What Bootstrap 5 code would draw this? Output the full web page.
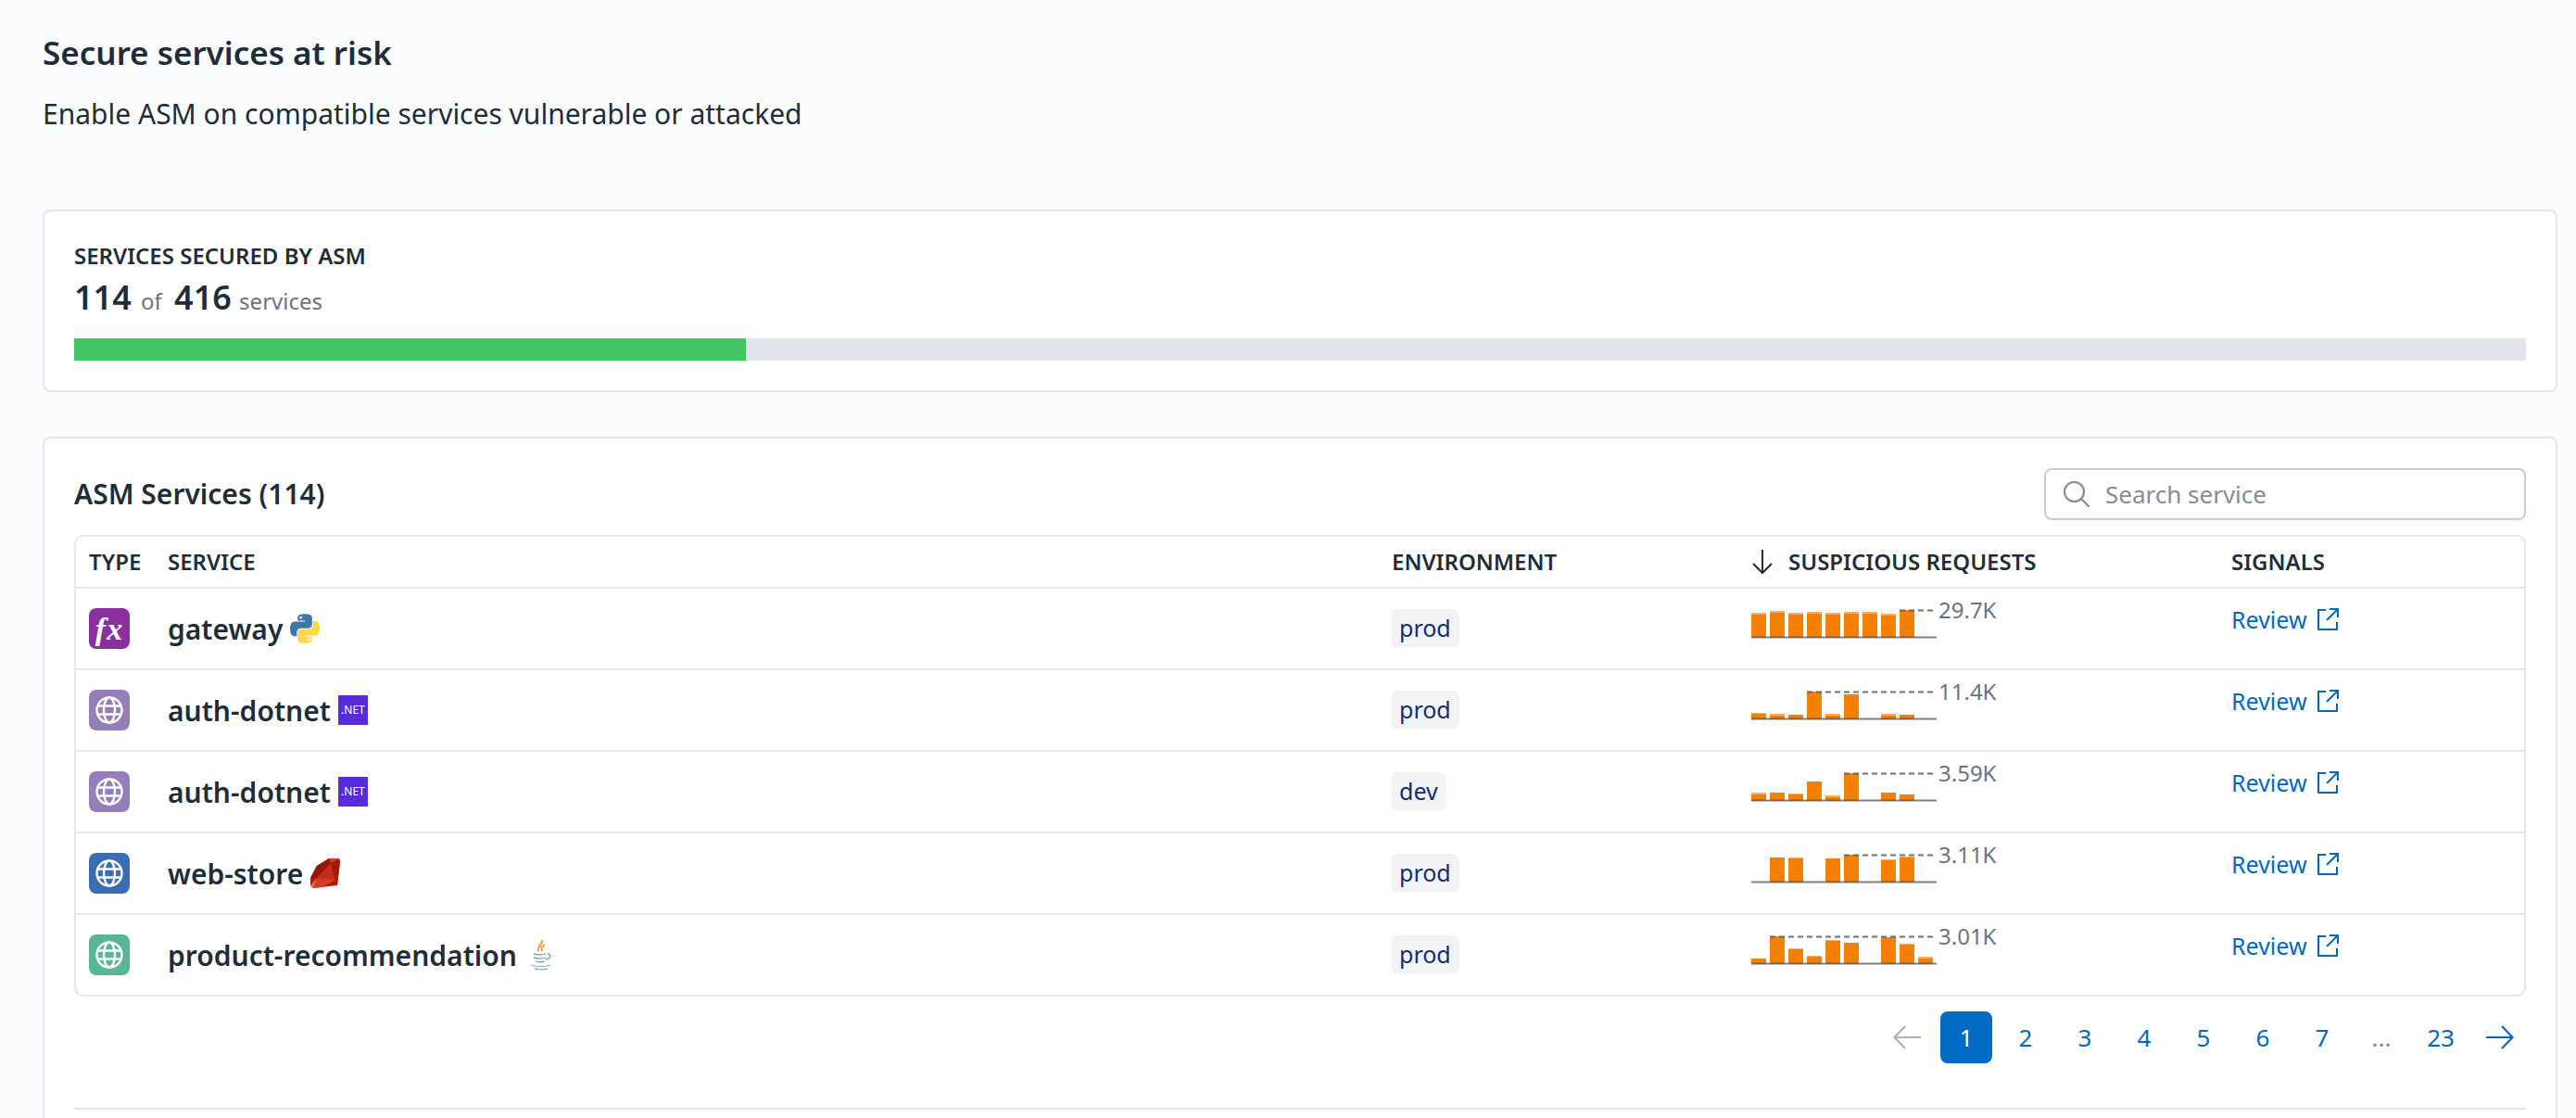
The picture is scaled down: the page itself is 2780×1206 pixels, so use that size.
<!DOCTYPE html>
<html lang="en">
<head>
<meta charset="utf-8">
<title>Secure services at risk</title>
<link href="https://cdn.jsdelivr.net/npm/bootstrap@5.3.0/dist/css/bootstrap.min.css" rel="stylesheet">
<style>
html,body{height:1206px;overflow:hidden}
body{background:#fbfcfe;color:#1f2d38;font-family:"Noto Sans",sans-serif;font-size:26px;padding:36px 20px 0 46px}
.page-title{font-size:35px;font-weight:600;line-height:42px;margin:0}
.page-sub{font-size:30px;line-height:42px;margin:24px 0 0}
.panel{background:#fff;border:2px solid #e4e6ef;border-radius:8px 8px 0 0}
.panel-progress{margin-top:82px;height:197px;padding:32px 32px 0;border-radius:8px}
.eyebrow{font-size:24px;font-weight:600;line-height:32px}
.count-line{line-height:48px;font-size:24px;color:#6a7580;padding-top:5px}
.count-line b{font-size:36px;font-weight:600;color:#1f2d38}
.count-of{margin:0 7px 0 4px}
.count-unit{margin-left:2px}
.meter{height:24px;background:#e1e4ec;border-radius:0;margin-top:16px}
.meter .progress-bar{background:#43c566}
.panel-services{margin-top:48px;padding:32px 32px 0;height:800px}
.svc-title{font-size:30px;font-weight:600;margin:0;line-height:40px}
.search-box{width:520px;height:56px;border:2px solid #c5cbe0;border-radius:8px;padding:0 18px;gap:16px}
.search-box input{border:0;padding:0;box-shadow:none;font-size:26px;color:#1f2d38;background:transparent}
.search-box input::placeholder{color:#858d96}
.tbl-wrap{border:2px solid #e4e6ef;border-radius:10px;margin-top:16px;overflow:hidden}
.svc-table{table-layout:fixed;margin:0;color:#1f2d38;--bs-table-color:#1f2d38;--bs-table-bg:transparent}
.svc-table th,.svc-table td{padding:0;border-bottom:2px solid #e4e6ef}
.svc-table tr:last-child td{border-bottom:0;height:87px}
.svc-table th{height:55px;font-size:24px;font-weight:600;vertical-align:middle;white-space:nowrap}
.svc-table td{height:88px;vertical-align:top}
.c-type{width:99px;padding-left:14px!important}
.c-svc{width:1321px}
.c-env{width:388px}
.c-req{width:518px}
.tile{width:44px;height:44px;border-radius:8px;margin-top:21px;color:#fff}
.tile-fn{background:#8a2f9e;font-family:"Liberation Serif",serif;font-style:italic;font-weight:700;font-size:34px;letter-spacing:1px}
.tile-a{background:#947fb9}.tile-b{background:#3b6db5}.tile-c{background:#57b795}
.svc-cell{height:86px;gap:8px;font-size:30px;font-weight:600}
.java-logo{margin-left:4px}
.env-pill{display:inline-block;background:#f3f3f5;color:#0d2f6e;border-radius:8px;height:42px;line-height:40px;padding:0 9px;margin:22px 0 0 -1px;font-size:25px}
.req-cell{padding-top:9px;color:#6a7580;font-size:24px;line-height:28px}
.req-cell svg{margin-top:12px;flex:none}
.req-num{margin-left:2px}
.review{color:#0068c0;text-decoration:none;display:inline-flex;align-items:center;gap:10px;margin-top:19px;line-height:28px;font-size:25px}
.pager{--bs-pagination-border-width:0;--bs-pagination-bg:transparent;--bs-pagination-color:#0068c0;--bs-pagination-active-bg:#006bc4;--bs-pagination-font-size:26px;--bs-pagination-border-radius:8px;margin:16px 0 0;gap:8px;align-items:center}
.pager .page-link{width:56px;height:56px;padding:0;display:flex;align-items:center;justify-content:center;border-radius:8px!important;margin:0!important}
.pager .gap-dots .page-link{color:#7b838c}
.rule{height:2px;background:#e4e6ef;margin-top:48px}
.net-logo{background:#5c2bd9;color:#fff;width:32px;height:32px;display:flex;align-items:center;justify-content:center;font-size:12px;font-weight:400}
.flex-none{flex:none}
</style>
</head>
<body>
<h1 class="page-title">Secure services at risk</h1>
<p class="page-sub">Enable ASM on compatible services vulnerable or attacked</p>

<section class="panel panel-progress">
  <div class="eyebrow">SERVICES SECURED BY ASM</div>
  <div class="count-line"><b>114</b> <span class="count-of">of</span> <b>416</b> <span class="count-unit">services</span></div>
  <div class="progress meter"><div class="progress-bar" style="width:27.4%"></div></div>
</section>

<section class="panel panel-services">
  <div class="d-flex justify-content-between align-items-center">
    <h2 class="svc-title">ASM Services (114)</h2>
    <label class="search-box d-flex align-items-center">
      <svg width="30" height="30" viewBox="0 0 30 30" fill="none" stroke="#858d96" stroke-width="2.2" class="flex-none"><circle cx="12.5" cy="12.5" r="10.5"/><path d="M20 20l8 8" stroke-linecap="round"/></svg>
      <input class="form-control" placeholder="Search service" aria-label="Search service">
    </label>
  </div>

  <div class="tbl-wrap">
    <table class="table svc-table">
      <thead>
        <tr>
          <th class="c-type">TYPE</th>
          <th class="c-svc">SERVICE</th>
          <th class="c-env">ENVIRONMENT</th>
          <th class="c-req"><div class="d-flex align-items-center gap-3"><svg width="24" height="28" viewBox="0 0 24 28" fill="none" stroke="#1f2d38" stroke-width="2"><path d="M12 1v25M2 16l10 10 10-10"/></svg>SUSPICIOUS REQUESTS</div></th>
          <th>SIGNALS</th>
        </tr>
      </thead>
      <tbody>
        <tr>
          <td class="c-type"><div class="tile tile-fn d-flex align-items-center justify-content-center">fx</div></td>
          <td><div class="svc-cell d-flex align-items-center">gateway
            <svg width="32" height="32" viewBox="0 0 110 110"><path fill="#3b77a8" d="M54.9 1C27 1 28.6 13.100 28.6 13.100l.03 12.6h26.7v3.800H18C18 29.500 0 27.500 0 55.800s15.700 27.300 15.700 27.300h9.400V70s-.5-15.700 15.400-15.700h26.600s14.900.2 14.900-14.400V15.800S84.300 1 54.900 1zM40.100 9.400a4.800 4.800 0 110 9.600 4.800 4.800 0 010-9.600z"/><path fill="#ffd84a" transform="rotate(180 55 55.500)" d="M54.9 1C27 1 28.6 13.100 28.6 13.100l.03 12.6h26.7v3.800H18C18 29.500 0 27.500 0 55.800s15.700 27.300 15.700 27.300h9.400V70s-.5-15.700 15.400-15.700h26.600s14.900.2 14.900-14.400V15.800S84.300 1 54.900 1zM40.100 9.400a4.800 4.800 0 110 9.600 4.800 4.800 0 010-9.600z"/></svg></div></td>
          <td><span class="env-pill">prod</span></td>
          <td><div class="req-cell d-flex"><svg width="200" height="34" viewBox="0 0 200 34"><path fill="#f47f00" d="M0 5h16V32H0zM20 3h16V32H20zM40 5h16V32H40zM60 4h16V32H60zM80 5h16V32H80zM100 4h16V32H100zM120 4h16V32H120zM140 6h16V32H140zM160 2h16V32H160z"/><path fill="#f9ad66" d="M0 5h16v2H0zM20 3h16v2H20zM40 5h16v2H40zM60 4h16v2H60zM80 5h16v2H80zM100 4h16v2H100zM120 4h16v2H120zM140 6h16v2H140z"/><path d="M160 2.500H200" stroke="#4f5a64" stroke-opacity=".85" stroke-width="2" stroke-dasharray="6 4"/><path d="M0 31.500H200" stroke="#4f5a64" stroke-opacity=".75" stroke-width="2"/></svg><span class="req-num">29.7K</span></div></td>
          <td><a class="review" href="#">Review <svg width="24" height="24" viewBox="0 0 24 24" fill="none" stroke="#0068c0" stroke-width="2"><path d="M10 2H2v21h20v-8M14 1h9v9M23 1L11 13"/></svg></a></td>
        </tr>
        <tr>
          <td class="c-type"><div class="tile tile-a d-flex align-items-center justify-content-center"><svg width="30" height="30" viewBox="0 0 30 30" fill="none" stroke="#fff" stroke-width="2.400"><circle cx="15" cy="15" r="13.500"/><ellipse cx="15" cy="15" rx="6" ry="13.500"/><path d="M2.500 10.500h25M2.500 19.500h25"/></svg></div></td>
          <td><div class="svc-cell d-flex align-items-center">auth-dotnet
            <span class="net-logo">.NET</span></div></td>
          <td><span class="env-pill">prod</span></td>
          <td><div class="req-cell d-flex"><svg width="200" height="34" viewBox="0 0 200 34"><path fill="#f47f00" d="M0 25h16V32H0zM20 26h16V32H20zM40 27h16V32H40zM60 2h16V32H60zM80 26h16V32H80zM100 5h16V32H100zM140 26h16V32H140zM160 27h16V32H160z"/><path fill="#f9ad66" d="M0 25h16v1H0zM20 26h16v2H20zM80 26h16v2H80zM140 26h16v2H140z"/><path d="M60 2.500H200" stroke="#4f5a64" stroke-opacity=".85" stroke-width="2" stroke-dasharray="6 4"/><path d="M0 31.500H200" stroke="#4f5a64" stroke-opacity=".75" stroke-width="2"/></svg><span class="req-num">11.4K</span></div></td>
          <td><a class="review" href="#">Review <svg width="24" height="24" viewBox="0 0 24 24" fill="none" stroke="#0068c0" stroke-width="2"><path d="M10 2H2v21h20v-8M14 1h9v9M23 1L11 13"/></svg></a></td>
        </tr>
        <tr>
          <td class="c-type"><div class="tile tile-a d-flex align-items-center justify-content-center"><svg width="30" height="30" viewBox="0 0 30 30" fill="none" stroke="#fff" stroke-width="2.400"><circle cx="15" cy="15" r="13.500"/><ellipse cx="15" cy="15" rx="6" ry="13.500"/><path d="M2.500 10.500h25M2.500 19.500h25"/></svg></div></td>
          <td><div class="svc-cell d-flex align-items-center">auth-dotnet
            <span class="net-logo">.NET</span></div></td>
          <td><span class="env-pill">dev</span></td>
          <td><div class="req-cell d-flex"><svg width="200" height="34" viewBox="0 0 200 34"><path fill="#f47f00" d="M0 23h16V32H0zM20 23h16V32H20zM40 24h16V32H40zM60 11h16V32H60zM80 26h16V32H80zM100 2h16V32H100zM140 23h16V32H140zM160 25h16V32H160z"/><path fill="#f9ad66" d="M0 23h16v2H0zM40 24h16v1H40zM80 26h16v2H80z"/><path d="M100 2.500H200" stroke="#4f5a64" stroke-opacity=".85" stroke-width="2" stroke-dasharray="6 4"/><path d="M0 31.500H200" stroke="#4f5a64" stroke-opacity=".75" stroke-width="2"/></svg><span class="req-num">3.59K</span></div></td>
          <td><a class="review" href="#">Review <svg width="24" height="24" viewBox="0 0 24 24" fill="none" stroke="#0068c0" stroke-width="2"><path d="M10 2H2v21h20v-8M14 1h9v9M23 1L11 13"/></svg></a></td>
        </tr>
        <tr>
          <td class="c-type"><div class="tile tile-b d-flex align-items-center justify-content-center"><svg width="30" height="30" viewBox="0 0 30 30" fill="none" stroke="#fff" stroke-width="2.400"><circle cx="15" cy="15" r="13.500"/><ellipse cx="15" cy="15" rx="6" ry="13.500"/><path d="M2.500 10.500h25M2.500 19.500h25"/></svg></div></td>
          <td><div class="svc-cell d-flex align-items-center">web-store
            <svg width="32" height="32" viewBox="0 0 32 32"><path fill="#b11a08" d="M20 0H31L32 4 29 29 3 32 0 29V21L7 8z"/><path fill="#9a130a" d="M20 0L7 8 0 21H7L22 5z"/><path fill="#c02d18" d="M22 5L7 21l20 2z"/><path fill="#d53a22" d="M7 21l20 2-14 8-10 1z"/><path fill="#a81809" d="M22 5L32 2 29 29 27 23z"/><path fill="#cb3c28" d="M22 5L20 0H31z"/><path fill="#e9654c" d="M0 29L7 21 3 32z"/></svg></div></td>
          <td><span class="env-pill">prod</span></td>
          <td><div class="req-cell d-flex"><svg width="200" height="34" viewBox="0 0 200 34"><path fill="#f47f00" d="M20 5h16V32H20zM40 5h16V32H40zM80 6h16V32H80zM100 2h16V32H100zM140 7h16V32H140zM160 4h16V32H160z"/><path fill="#f9ad66" d="M40 5h16v1H40zM140 7h16v1H140zM160 4h16v1H160z"/><path d="M100 2.500H200" stroke="#4f5a64" stroke-opacity=".85" stroke-width="2" stroke-dasharray="6 4"/><path d="M0 31.500H200" stroke="#4f5a64" stroke-opacity=".75" stroke-width="2"/></svg><span class="req-num">3.11K</span></div></td>
          <td><a class="review" href="#">Review <svg width="24" height="24" viewBox="0 0 24 24" fill="none" stroke="#0068c0" stroke-width="2"><path d="M10 2H2v21h20v-8M14 1h9v9M23 1L11 13"/></svg></a></td>
        </tr>
        <tr>
          <td class="c-type"><div class="tile tile-c d-flex align-items-center justify-content-center"><svg width="30" height="30" viewBox="0 0 30 30" fill="none" stroke="#fff" stroke-width="2.400"><circle cx="15" cy="15" r="13.500"/><ellipse cx="15" cy="15" rx="6" ry="13.500"/><path d="M2.500 10.500h25M2.500 19.500h25"/></svg></div></td>
          <td><div class="svc-cell d-flex align-items-center">product-recommendation
            <svg class="java-logo" width="26" height="34" viewBox="0 0 26 34" fill="none"><path d="M15 1c2 4-6 6-4 12M18 6c-4 2-4 4-3 7" stroke="#f08c2a" stroke-width="1.800"/><path d="M6 16c4 1 10 1 13 0M6 20c4 1 10 1 13 0M8 24c3 1 7 1 10 0M21 16c4 0 4 5-2 6" stroke="#6e9fc0" stroke-width="1.300"/><path d="M3 28c6 2 15 2 21 0M7 32c5 1 10 1 14 0" stroke="#8eb3cc" stroke-width="1.300"/></svg></div></td>
          <td><span class="env-pill">prod</span></td>
          <td><div class="req-cell d-flex"><svg width="200" height="34" viewBox="0 0 200 34"><path fill="#f47f00" d="M0 26h16V32H0zM20 2h16V32H20zM40 15h16V32H40zM60 23h16V32H60zM80 6h16V32H80zM100 9h16V32H100zM140 3h16V32H140zM160 10h16V32H160zM180 24h16V32H180z"/><path fill="#f9ad66" d="M40 15h16v1H40zM60 23h16v1H60zM80 6h16v1H80zM160 10h16v1H160zM180 24h16v2H180z"/><path d="M20 2.500H196" stroke="#4f5a64" stroke-opacity=".85" stroke-width="2" stroke-dasharray="6 4"/><path d="M0 31.500H200" stroke="#4f5a64" stroke-opacity=".75" stroke-width="2"/></svg><span class="req-num">3.01K</span></div></td>
          <td><a class="review" href="#">Review <svg width="24" height="24" viewBox="0 0 24 24" fill="none" stroke="#0068c0" stroke-width="2"><path d="M10 2H2v21h20v-8M14 1h9v9M23 1L11 13"/></svg></a></td>
        </tr>
      </tbody>
    </table>
  </div>

  <ul class="pagination pager justify-content-end">
    <li class="page-item disabled"><a class="page-link bg-transparent" href="#" aria-label="Previous"><svg width="30" height="26" viewBox="0 0 30 26" fill="none" stroke="#adb1b6" stroke-width="2.200"><path d="M30 13H2M13 1L1.500 13 13 25"/></svg></a></li>
    <li class="page-item active"><a class="page-link" href="#">1</a></li>
    <li class="page-item"><a class="page-link" href="#">2</a></li>
    <li class="page-item"><a class="page-link" href="#">3</a></li>
    <li class="page-item"><a class="page-link" href="#">4</a></li>
    <li class="page-item"><a class="page-link" href="#">5</a></li>
    <li class="page-item"><a class="page-link" href="#">6</a></li>
    <li class="page-item"><a class="page-link" href="#">7</a></li>
    <li class="page-item gap-dots"><span class="page-link">...</span></li>
    <li class="page-item"><a class="page-link" href="#">23</a></li>
    <li class="page-item"><a class="page-link" href="#" aria-label="Next"><svg width="30" height="26" viewBox="0 0 30 26" fill="none" stroke="#0068c0" stroke-width="2.200"><path d="M0 13h28M17 1l11.500 12L17 25"/></svg></a></li>
  </ul>
  <div class="rule"></div>
</section>
</body>
</html>
